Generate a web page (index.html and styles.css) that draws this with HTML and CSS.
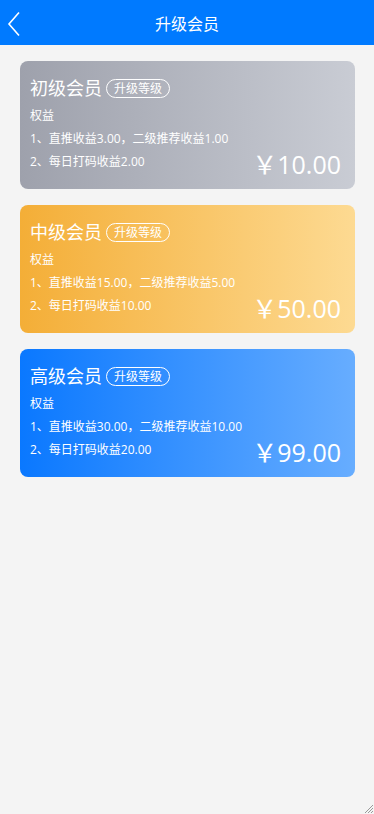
FILE: index.html
```html
<!DOCTYPE html>
<html lang="zh-CN">
<head>
  <meta charset="UTF-8">
  <title>升级会员</title>
  <link rel="stylesheet" href="styles.css">
</head>
<body>

  <div class="header">
    <a class="back" href="#">
      <svg width="14" height="26" viewBox="0 0 14 26"><path d="M12 1.5 L2 13 L12 24.5" fill="none" stroke="#fff" stroke-width="1.6"/></svg>
    </a>
    <h1>升级会员</h1>
  </div>

  <div class="list">
    <div class="card gray">
      <div class="title">初级会员<span class="badge">升级等级</span></div>
      <div class="label">权益</div>
      <div class="line">1、直推收益3.00，二级推荐收益1.00</div>
      <div class="bottom">
        <div class="line">2、每日打码收益2.00</div>
        <div class="price">￥10.00</div>
      </div>
    </div>

    <div class="card orange">
      <div class="title">中级会员<span class="badge">升级等级</span></div>
      <div class="label">权益</div>
      <div class="line">1、直推收益15.00，二级推荐收益5.00</div>
      <div class="bottom">
        <div class="line">2、每日打码收益10.00</div>
        <div class="price">￥50.00</div>
      </div>
    </div>

    <div class="card blue">
      <div class="title">高级会员<span class="badge">升级等级</span></div>
      <div class="label">权益</div>
      <div class="line">1、直推收益30.00，二级推荐收益10.00</div>
      <div class="bottom">
        <div class="line">2、每日打码收益20.00</div>
        <div class="price">￥99.00</div>
      </div>
    </div>
  </div>

  <svg class="grip" width="12" height="12" viewBox="0 0 12 12">
    <path d="M11 3 L3 11 M11 6 L6 11 M11 9 L9 11" stroke="#999" stroke-width="1"/>
  </svg>

</body>
</html>
```

FILE: styles.css
```css
html, body {
  height: 100%;
}
body {
  margin: 0;
  background: #f4f4f4;
  font-family: "Open Sans", "Noto Sans CJK SC", sans-serif;
  color: #fff;
}
.header {
  height: 45px;
  background: #007aff;
  display: flex;
  align-items: center;
  justify-content: center;
  position: relative;
}
.header h1 {
  margin: 0;
  font-size: 16px;
  font-weight: normal;
}
.back {
  position: absolute;
  left: 7px;
  top: 11px;
  display: block;
}
.list {
  padding: 16px 19px 0 20px;
  display: flex;
  flex-direction: column;
  gap: 16px;
}
.card {
  border-radius: 8px;
  padding: 13px 14px 6px 10px;
  height: 128px;
  box-sizing: border-box;
}
.gray {
  background: linear-gradient(to right, #9ea1ac, #c9ccd4);
}
.orange {
  background: linear-gradient(to right, #f4ae37, #fdda92);
}
.blue {
  background: linear-gradient(to right, #0a78ff, #67adff);
}
.title {
  font-size: 18px;
  line-height: 28px;
  display: flex;
  align-items: center;
  gap: 4px;
}
.badge {
  font-size: 12px;
  line-height: 17px;
  border: 1px solid #fff;
  border-radius: 10px;
  padding: 0 7px;
}
.label {
  font-size: 12px;
  line-height: 18px;
  margin-top: 5px;
}
.line {
  font-size: 12px;
  line-height: 18px;
  margin-top: 5px;
}
.bottom {
  display: flex;
  justify-content: space-between;
  align-items: flex-start;
}
.price {
  font-size: 25px;
  line-height: 30px;
  margin-top: 1px;
}
.grip {
  position: fixed;
  right: 0;
  bottom: 0;
}
```
